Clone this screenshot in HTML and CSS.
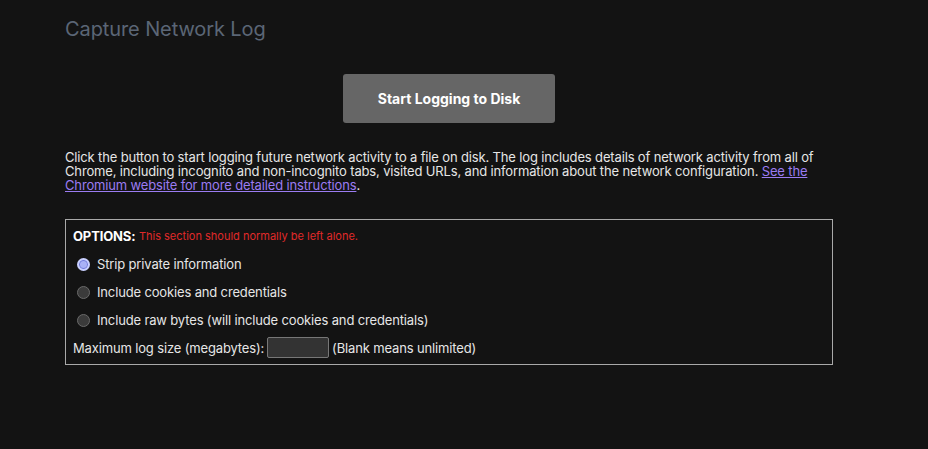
FILE: index.html
```html
<!DOCTYPE html>
<html>
<head>
<meta charset="utf-8">
<link rel="stylesheet" href="styles.css">
</head>
<body>
<div class="page">
  <h1 class="title">Capture Network Log</h1>
  <div class="btn-row">
    <button class="start-btn">Start Logging to Disk</button>
  </div>
  <p class="desc">Click the button to start logging future network activity to a file on disk. The log includes details of network activity from all of Chrome, including incognito and non-incognito tabs, visited URLs, and information about the network configuration. <a class="link" href="#">See the Chromium website for more detailed instructions</a>.</p>
  <div class="options">
    <div class="opt-head"><b>OPTIONS:</b>&nbsp;<span class="warn">This section should normally be left alone.</span></div>
    <label class="opt-row"><span class="radio checked"></span>Strip private information</label>
    <label class="opt-row"><span class="radio"></span>Include cookies and credentials</label>
    <label class="opt-row"><span class="radio"></span>Include raw bytes (will include cookies and credentials)</label>
    <div class="size-row">Maximum log size (megabytes):<span class="size-input"></span>(Blank means unlimited)</div>
  </div>
</div>
</body>
</html>
```
FILE: styles.css
```css
html, body {
  margin: 0;
  background: #131313;
}
body {
  font-family: Inter, "Noto Sans", sans-serif;
  color: #e6e6e6;
  font-size: 13px;
  letter-spacing: -0.15px;
}
.page {
  width: 768px;
  padding: 15px 0 0 65px;
}
.title {
  margin: 0;
  font-size: 20px;
  font-weight: 400;
  line-height: 28px;
  letter-spacing: -0.1px;
  color: #5b6676;
}
.btn-row {
  display: flex;
  justify-content: center;
  margin-top: 31px;
}
.start-btn {
  width: 212px;
  height: 49px;
  border: none;
  border-radius: 3px;
  background: #666666;
  color: #ffffff;
  font-family: inherit;
  font-size: 14px;
  font-weight: 700;
  letter-spacing: 0;
}
.desc {
  margin: 27px 0 0;
  line-height: 14px;
}
.link {
  color: #9b7cf2;
}
.options {
  margin-top: 27px;
  border: 1px solid #a9a9a9;
  padding: 2px 7px 3px;
}
.opt-head {
  display: flex;
  align-items: center;
  height: 28px;
}
.opt-head b {
  font-weight: 700;
  color: #ffffff;
}
.warn {
  color: #e02a2a;
  font-size: 11px;
  letter-spacing: 0;
}
.opt-row {
  display: flex;
  align-items: center;
  height: 28px;
  padding-left: 4px;
}
.radio {
  width: 13px;
  height: 13px;
  border-radius: 50%;
  background: #3b3b3b;
  border: 1px solid #6a6a6a;
  margin-right: 7px;
  box-sizing: border-box;
}
.radio.checked {
  background: #a9b2f7;
  border: 2px solid #c9d0ff;
  box-shadow: inset 0 0 0 1px #6f78d8;
}
.size-row {
  display: flex;
  align-items: center;
  height: 27px;
}
.size-input {
  display: inline-block;
  width: 60px;
  height: 19px;
  background: #333333;
  border: 1px solid #777;
  border-radius: 2px;
  margin: 0 3px;
}
```
